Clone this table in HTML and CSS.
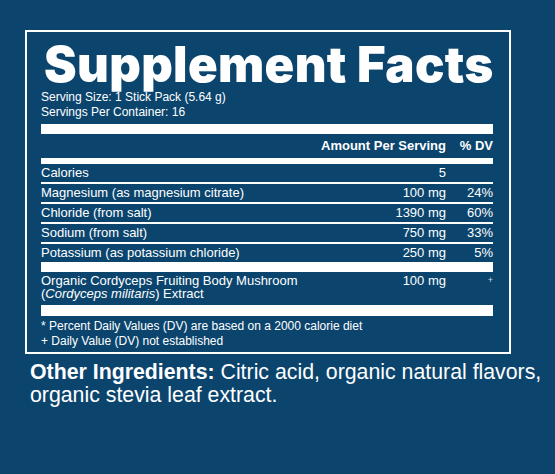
FILE: index.html
```html
<!DOCTYPE html>
<html lang="en">
<head>
    <meta charset="UTF-8">
    <meta name="viewport" content="width=device-width, initial-scale=1.0">
    <title>Supplement Facts</title>
    <link rel="stylesheet" href="styles.css">
</head>
<body>
    <!-- Facts Panel -->
    <div class="facts">
        <h1 class="facts-title">Supplement Facts</h1>
        <p class="serving">Serving Size: 1 Stick Pack (5.64 g)</p>
        <p class="serving">Servings Per Container: 16</p>

        <div class="bar thick bar-top"></div>

        <div class="row head">
            <span class="name"></span>
            <span class="amount">Amount Per Serving</span>
            <span class="dv">% DV</span>
        </div>

        <div class="bar medium"></div>

        <div class="row">
            <span class="name">Calories</span>
            <span class="amount">5</span>
            <span class="dv"></span>
        </div>
        <div class="row">
            <span class="name">Magnesium (as magnesium citrate)</span>
            <span class="amount">100 mg</span>
            <span class="dv">24%</span>
        </div>
        <div class="row">
            <span class="name">Chloride (from salt)</span>
            <span class="amount">1390 mg</span>
            <span class="dv">60%</span>
        </div>
        <div class="row">
            <span class="name">Sodium (from salt)</span>
            <span class="amount">750 mg</span>
            <span class="dv">33%</span>
        </div>
        <div class="row last">
            <span class="name">Potassium (as potassium chloride)</span>
            <span class="amount">250 mg</span>
            <span class="dv">5%</span>
        </div>

        <div class="bar thick"></div>

        <div class="row last tall">
            <span class="name">Organic Cordyceps Fruiting Body Mushroom<br>(<i>Cordyceps militaris</i>) Extract</span>
            <span class="amount">100 mg</span>
            <span class="dv small">+</span>
        </div>

        <div class="bar thick bar-bottom"></div>

        <p class="note">* Percent Daily Values (DV) are based on a 2000 calorie diet</p>
        <p class="note">+ Daily Value (DV) not established</p>
    </div>

    <!-- Other Ingredients -->
    <p class="other"><b>Other Ingredients:</b> Citric acid, organic natural flavors, organic stevia leaf extract.</p>
</body>
</html>
```

FILE: styles.css
```css
/* Basic Styles */
body {
    margin: 0;
    padding: 30px 0 0 25px;
    background: #0b456e;
    color: #fff;
    font-family: "Liberation Sans", Arial, sans-serif;
}

/* Facts Panel */
.facts {
    width: 452px;
    padding: 0 16px 3px 14px;
    border: 2px solid #fff;
}

.facts-title {
    margin: 0;
    padding: 8px 0 0 3px;
    font-family: "Inter", "Liberation Sans", sans-serif;
    font-size: 49px;
    font-weight: 900;
    line-height: 50px;
    letter-spacing: 0.35px;
    white-space: nowrap;
}

.serving, .note {
    margin: 0;
    font-size: 12px;
    line-height: 15px;
}

/* Bars */
.bar {
    background: #fff;
}

.bar.thick {
    height: 10px;
}

.bar.bar-top {
    margin: 4px 0 3px;
}

.bar.bar-bottom {
    height: 11px;
    margin: 5px 0 3px;
}

.bar.medium {
    height: 6px;
    margin-top: 3px;
}

/* Rows */
.row {
    display: flex;
    align-items: flex-start;
    font-size: 13px;
    line-height: 18px;
    border-bottom: 2px solid #fff;
}

.row.last {
    border-bottom: none;
}

.row.head {
    font-weight: 700;
    border-bottom: none;
}

.row.tall {
    padding-top: 2px;
    line-height: 13px;
}

.name {
    flex: 1;
}

.amount {
    width: 140px;
    text-align: right;
}

.dv {
    width: 47px;
    text-align: right;
}

.dv.small {
    font-size: 9px;
    color: #cfd9e2;
}

/* Other Ingredients */
.other {
    width: 525px;
    margin: 7px 0 0 5px;
    font-size: 21.3px;
    line-height: 23px;
}
```
